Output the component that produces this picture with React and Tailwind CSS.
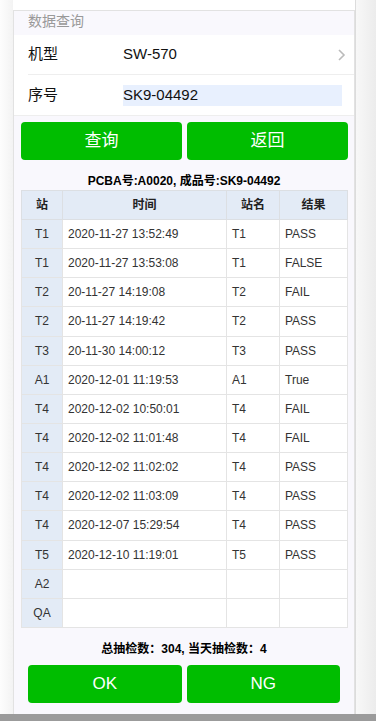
import React from 'react';

const rows = [
  ['T1', '2020-11-27 13:52:49', 'T1', 'PASS'],
  ['T1', '2020-11-27 13:53:08', 'T1', 'FALSE'],
  ['T2', '20-11-27 14:19:08', 'T2', 'FAIL'],
  ['T2', '20-11-27 14:19:42', 'T2', 'PASS'],
  ['T3', '20-11-30 14:00:12', 'T3', 'PASS'],
  ['A1', '2020-12-01 11:19:53', 'A1', 'True'],
  ['T4', '2020-12-02 10:50:01', 'T4', 'FAIL'],
  ['T4', '2020-12-02 11:01:48', 'T4', 'FAIL'],
  ['T4', '2020-12-02 11:02:02', 'T4', 'PASS'],
  ['T4', '2020-12-02 11:03:09', 'T4', 'PASS'],
  ['T4', '2020-12-07 15:29:54', 'T4', 'PASS'],
  ['T5', '2020-12-10 11:19:01', 'T5', 'PASS'],
  ['A2', '', '', ''],
  ['QA', '', '', ''],
];

const font = { fontFamily: '"Liberation Sans", Arial, "Noto Sans CJK SC", sans-serif' };

const App = () => {
  return (
    <div className="w-[376px] h-[721px] flex flex-col bg-white overflow-hidden" style={font}>
      <div className="flex flex-1">
        <div className="w-[13px] bg-gradient-to-r from-[#fdfdfd] to-[#f3f3f3]" />
        <div className="w-[342px] mt-[10px] flex flex-col bg-[#f9f8fd] border border-[#e2e2e2] border-b-0">
          <div className="h-[24px] pl-[14px] text-[14px] text-[#999] leading-[20px]">数据查询</div>
          <div className="bg-white">
            <div className="h-[40px] ml-[14px] flex items-center border-b border-[#eee] text-[15px] text-[#111]">
              <span className="w-[95px]">机型</span>
              <span className="flex-1">SW-570</span>
              <svg width="9" height="14" viewBox="0 0 9 14" className="mr-[8px]">
                <path d="M2 2l5 5-5 5" fill="none" stroke="#bbb" strokeWidth="1.6" />
              </svg>
            </div>
            <div className="h-[40px] ml-[14px] flex items-center text-[15px] text-[#111]">
              <span className="w-[95px]">序号</span>
              <div className="flex-1 mr-[12px] h-[21px] bg-[#e8f0fe] flex items-center">SK9-04492</div>
            </div>
          </div>
          <div className="border-t border-[#eee] pl-[7px] pr-[6px] pt-[6px] flex gap-[5px]">
            <button className="flex-1 h-[38px] rounded-[4px] bg-[#00bd00] text-white text-[17px]">查询</button>
            <button className="flex-1 h-[38px] rounded-[4px] bg-[#00bd00] text-white text-[17px]">返回</button>
          </div>
          <div className="text-center font-bold text-[12px] text-black h-[30px] leading-[14px] pt-[14px]">
            PCBA号:A0020, 成品号:SK9-04492
          </div>
          <div className="pl-[7px] pr-[6px]">
            <table className="w-full border-collapse text-[12px] text-[#333]">
              <thead>
                <tr className="bg-[#e3ebf6] h-[29px] font-bold text-[#222]">
                  <th className="border border-[#dcdfe3] w-[41px]">站</th>
                  <th className="border border-[#dcdfe3] w-[164px]">时间</th>
                  <th className="border border-[#dcdfe3] w-[53px]">站名</th>
                  <th className="border border-[#dcdfe3]">结果</th>
                </tr>
              </thead>
              <tbody>
                {rows.map((r, i) => (
                  <tr key={i} className="h-[29.15px]">
                    <td className="border border-[#e4e4e4] bg-[#e3ebf6] text-center">{r[0]}</td>
                    <td className="border border-[#e4e4e4] bg-white pl-[5px]">{r[1]}</td>
                    <td className="border border-[#e4e4e4] bg-white pl-[5px]">{r[2]}</td>
                    <td className="border border-[#e4e4e4] bg-white pl-[5px]">{r[3]}</td>
                  </tr>
                ))}
              </tbody>
            </table>
          </div>
          <div className="text-center font-bold text-[12px] text-black mt-[14px] leading-[14px]">
            总抽检数：304, 当天抽检数：4
          </div>
          <div className="pl-[14px] pr-[14px] mt-[9px] flex gap-[5px]">
            <button className="flex-1 h-[38px] rounded-[4px] bg-[#00bd00] text-white text-[17px]">OK</button>
            <button className="flex-1 h-[38px] rounded-[4px] bg-[#00bd00] text-white text-[17px]">NG</button>
          </div>
        </div>
        <div className="flex-1 bg-gradient-to-r from-[#f8f8f8] to-[#ececec] border-l border-[#dcdcdc]" />
      </div>
      <div className="h-[7px] bg-[#9b9b9b]" />
    </div>
  );
};

export default App;
